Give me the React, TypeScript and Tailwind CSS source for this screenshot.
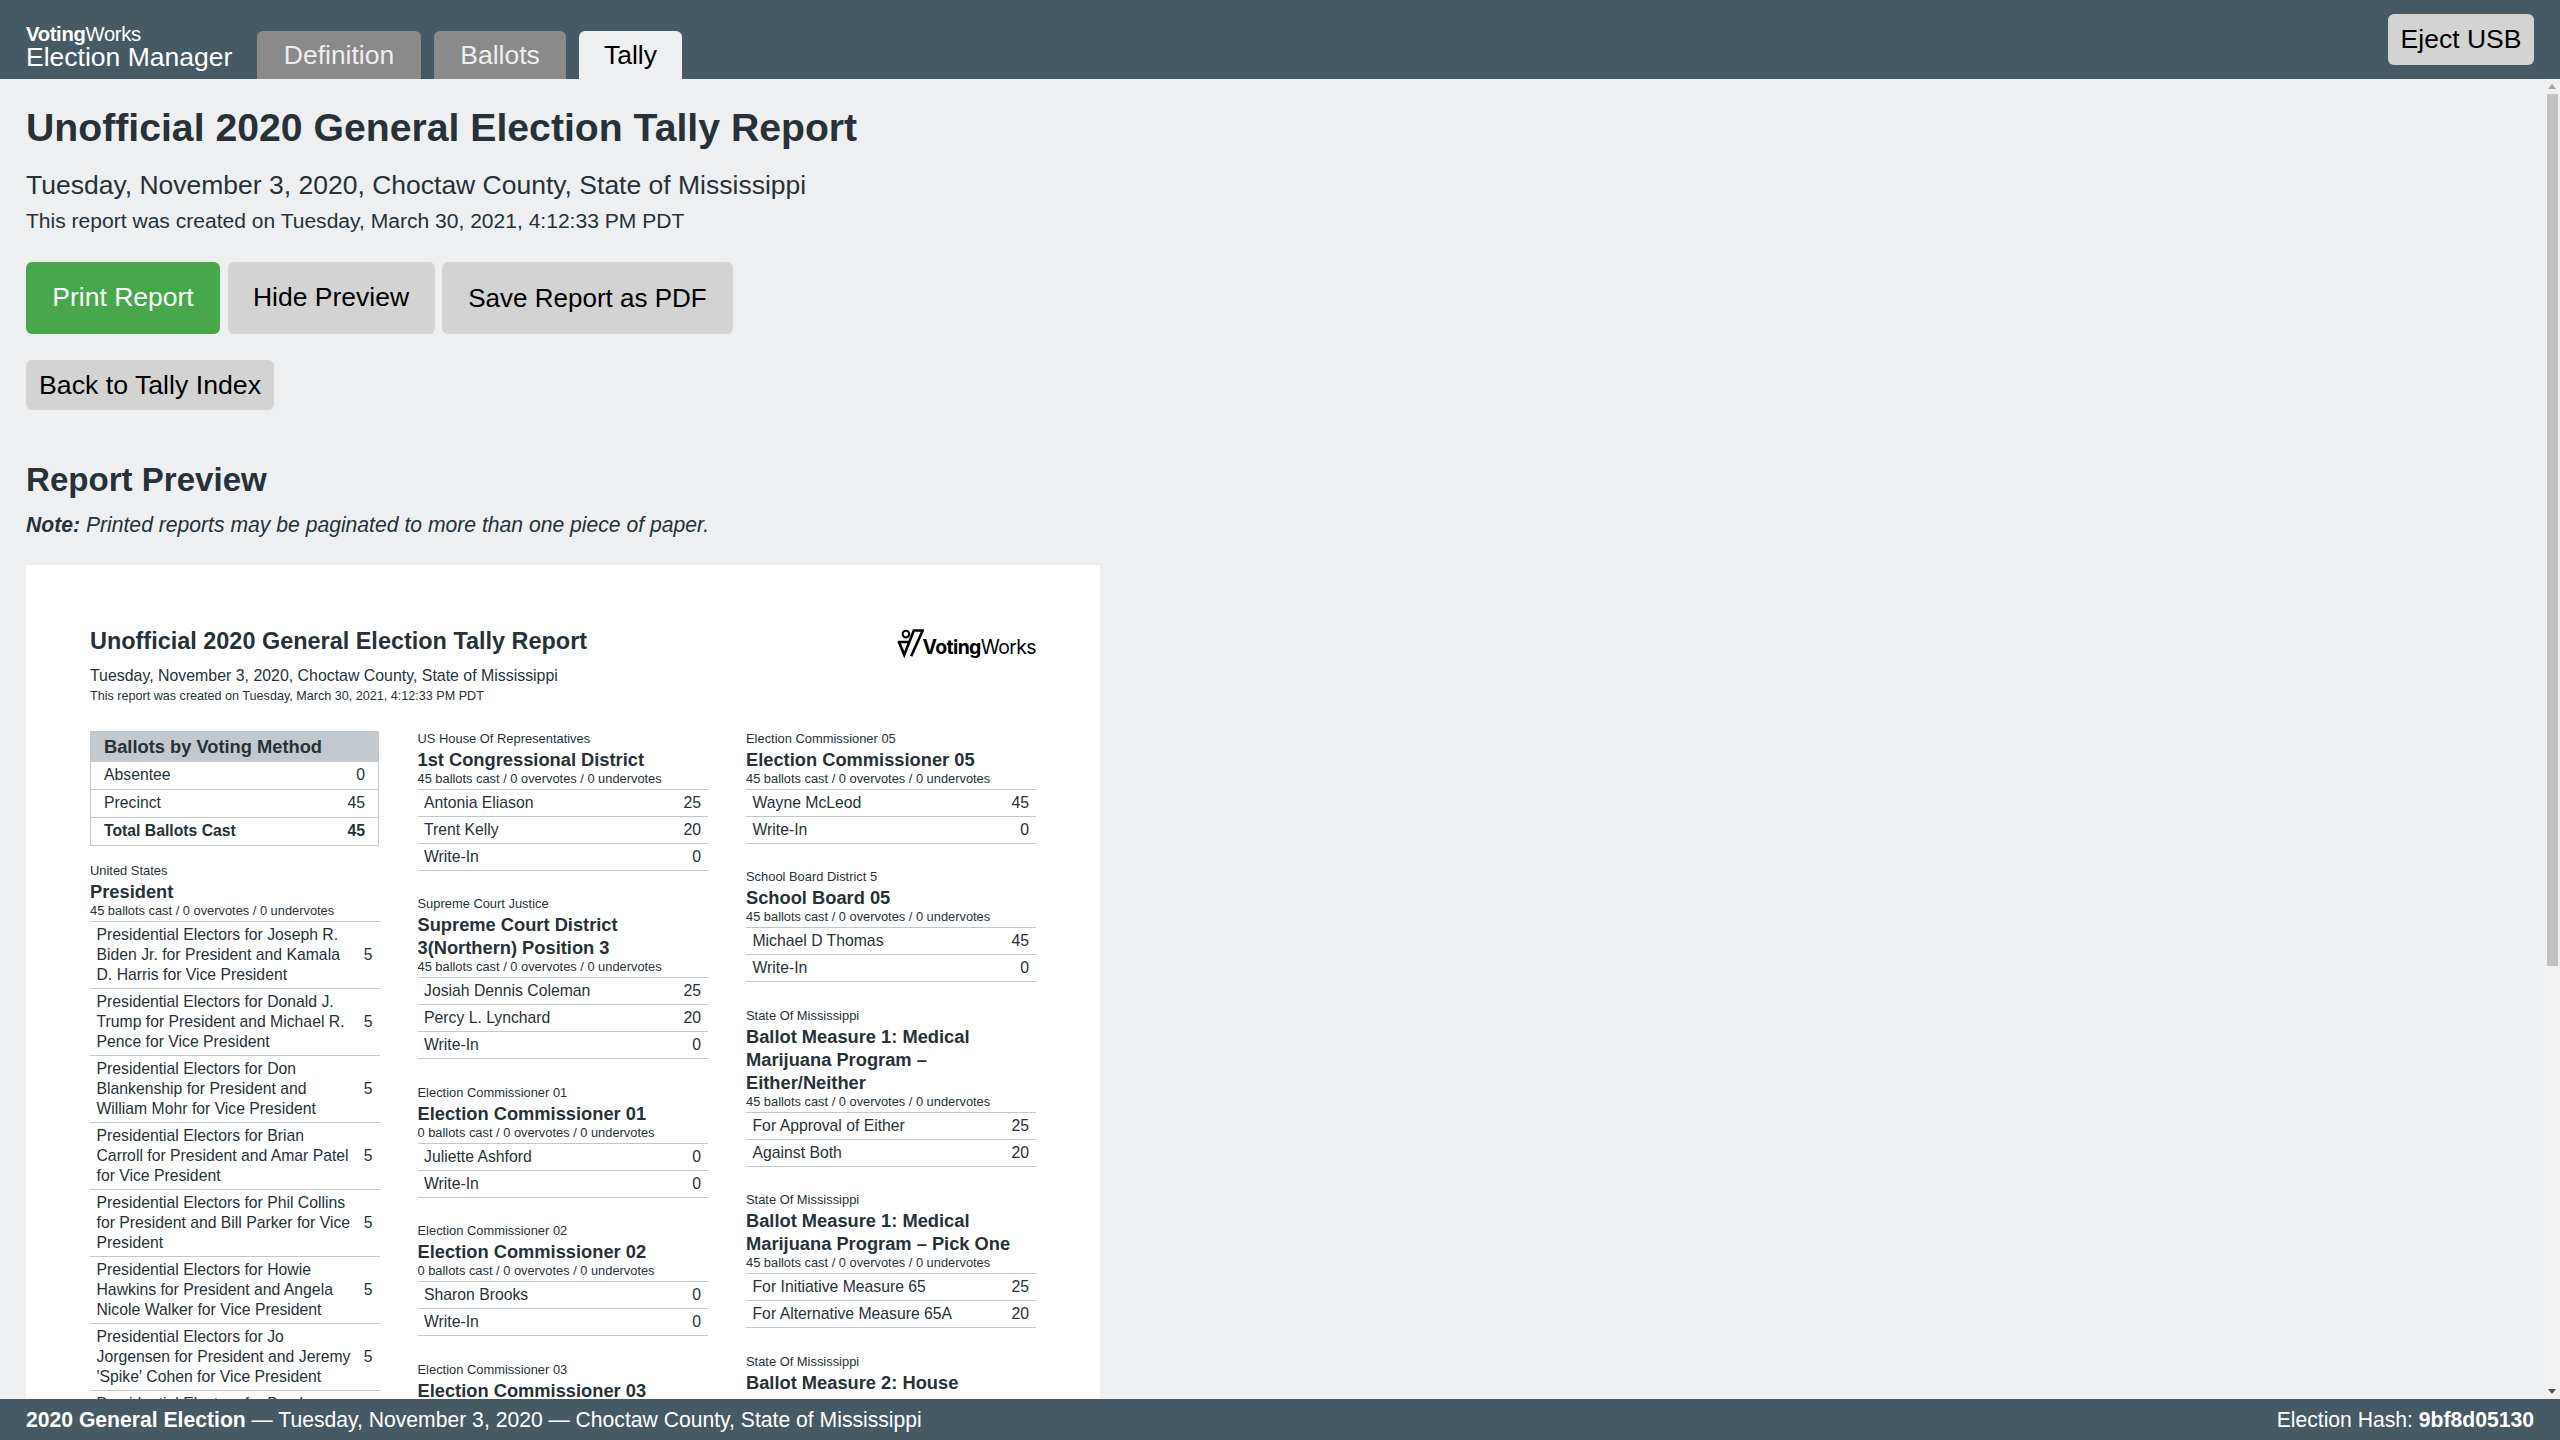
const font = { fontFamily: '"Liberation Sans", Arial, sans-serif' };

type C = { label: string; title: string; meta?: string; rows: [string, number][] };
const m45 = '45 ballots cast / 0 overvotes / 0 undervotes';
const m0 = '0 ballots cast / 0 overvotes / 0 undervotes';

const col1: C[] = [
  {
    label: 'United States', title: 'President', meta: m45,
    rows: [
      ['Presidential Electors for Joseph R. Biden Jr. for President and Kamala D. Harris for Vice President', 5],
      ['Presidential Electors for Donald J. Trump for President and Michael R. Pence for Vice President', 5],
      ['Presidential Electors for Don Blankenship for President and William Mohr for Vice President', 5],
      ['Presidential Electors for Brian Carroll for President and Amar Patel for Vice President', 5],
      ['Presidential Electors for Phil Collins for President and Bill Parker for Vice President', 5],
      ['Presidential Electors for Howie Hawkins for President and Angela Nicole Walker for Vice President', 5],
      ["Presidential Electors for Jo Jorgensen for President and Jeremy 'Spike' Cohen for Vice President", 5],
      ['Presidential Electors for Brock Pierce for President and Karla Ballard for Vice President', 5],
    ],
  },
];
const col2: C[] = [
  { label: 'US House Of Representatives', title: '1st Congressional District', meta: m45, rows: [['Antonia Eliason', 25], ['Trent Kelly', 20], ['Write-In', 0]] },
  { label: 'Supreme Court Justice', title: 'Supreme Court District 3(Northern) Position 3', meta: m45, rows: [['Josiah Dennis Coleman', 25], ['Percy L. Lynchard', 20], ['Write-In', 0]] },
  { label: 'Election Commissioner 01', title: 'Election Commissioner 01', meta: m0, rows: [['Juliette Ashford', 0], ['Write-In', 0]] },
  { label: 'Election Commissioner 02', title: 'Election Commissioner 02', meta: m0, rows: [['Sharon Brooks', 0], ['Write-In', 0]] },
  { label: 'Election Commissioner 03', title: 'Election Commissioner 03', meta: m0, rows: [['Write-In', 0]] },
];
const col3: C[] = [
  { label: 'Election Commissioner 05', title: 'Election Commissioner 05', meta: m45, rows: [['Wayne McLeod', 45], ['Write-In', 0]] },
  { label: 'School Board District 5', title: 'School Board 05', meta: m45, rows: [['Michael D Thomas', 45], ['Write-In', 0]] },
  { label: 'State Of Mississippi', title: 'Ballot Measure 1: Medical Marijuana Program – Either/Neither', meta: m45, rows: [['For Approval of Either', 25], ['Against Both', 20]] },
  { label: 'State Of Mississippi', title: 'Ballot Measure 1: Medical Marijuana Program – Pick One', meta: m45, rows: [['For Initiative Measure 65', 25], ['For Alternative Measure 65A', 20]] },
  { label: 'State Of Mississippi', title: 'Ballot Measure 2: House Concurrent Resolution No. 47', meta: m45, rows: [['Yes', 25], ['No', 20]] },
];

function Contest({ c }: { c: C }) {
  return (
    <section className="mb-[25.5px]">
      <div className="text-[12.9px] leading-[16px] mb-px">{c.label}</div>
      <h3 className="text-[18.3px] leading-[23px] font-bold">{c.title}</h3>
      <div className="text-[12.85px] leading-[15px] mb-[3px]">{c.meta}</div>
      <div className="border-t border-[#c2c8cc]">
        {c.rows.map(([n, v], i) => (
          <div key={i} className="flex items-center justify-between border-b border-[#c2c8cc] pl-[6.5px] pr-[7px] py-[3px] text-[15.75px] leading-[20px]">
            <span className="w-[257px]">{n}</span>
            <span className="text-right">{v}</span>
          </div>
        ))}
      </div>
    </section>
  );
}

function Logo() {
  return (
    <div className="flex items-end text-black mt-[2px]">
      <svg width="27" height="30" viewBox="590 140 82 88" className="mr-[-1px]" fill="none" stroke="#000" strokeWidth="8">
        <circle cx="617" cy="157" r="10" strokeWidth="6" />
        <path d="M592 181H626M596 181L612 220L641 146H668L633 224" />
      </svg>
      <span className="text-[19.4px] leading-[22px] tracking-[-0.6px]" style={{ fontFamily: 'Inter, sans-serif' }}>
        <b className="font-bold">Voting</b>Works
      </span>
    </div>
  );
}

function Row({ n, v, bold }: { n: string; v: number; bold?: boolean }) {
  return (
    <div className={`flex justify-between border-b border-[#c2c8cc] px-[13px] py-[3.5px] text-[15.75px] leading-[20px] ${bold ? 'font-bold' : ''}`}>
      <span>{n}</span>
      <span>{v}</span>
    </div>
  );
}

export default function App() {
  return (
    <div className="h-screen flex flex-col bg-[#edeff0] text-[#263238] overflow-hidden" style={font}>
      <header className="h-[79px] shrink-0 bg-[#455a64] flex items-end justify-between pl-[26px] pr-[26px]">
        <div className="flex items-end">
          <div className="text-white mb-[9px] mr-[25px] w-[206px]">
            <div className="text-[20.2px] leading-[19px] tracking-[-0.3px]"><b>Voting</b>Works</div>
            <div className="text-[26.5px] leading-[26px] whitespace-nowrap">Election Manager</div>
          </div>
          <div className="flex gap-[13px]">
            <div className="h-[48px] w-[164px] text-center rounded-t-[6px] bg-[#8a8a8a] text-[#eeeeee] text-[26.5px] leading-[48px]">Definition</div>
            <div className="h-[48px] w-[132px] text-center rounded-t-[6px] bg-[#8a8a8a] text-[#eeeeee] text-[26.5px] leading-[48px]">Ballots</div>
            <div className="h-[48px] w-[103px] text-center rounded-t-[6px] bg-[#edeff0] text-black text-[26.5px] leading-[48px]">Tally</div>
          </div>
        </div>
        <button className="mb-[14px] h-[51px] w-[146px] rounded-[6px] bg-[#d3d3d3] text-black text-[26.5px]">Eject USB</button>
      </header>

      <div className="relative flex-1 min-h-0">
        <main className="h-full overflow-y-hidden px-[26px] pt-[26px] pb-[26px]">
          <h1 className="text-[39.2px] leading-[46px] font-bold mb-[16px]">Unofficial 2020 General Election Tally Report</h1>
          <p className="text-[26.5px] leading-[36px]">Tuesday, November 3, 2020, Choctaw County, State of Mississippi</p>
          <p className="text-[21.05px] leading-[36px] mb-[23px]">This report was created on Tuesday, March 30, 2021, 4:12:33 PM PDT</p>
          <div className="flex gap-[7.5px] mb-[26px]">
            <button className="h-[72px] w-[194px] rounded-[6px] bg-[#47a74b] text-white text-[26.5px]">Print Report</button>
            <button className="h-[72px] w-[207px] rounded-[6px] bg-[#d3d3d3] text-black text-[26.5px]">Hide Preview</button>
            <button className="h-[72px] w-[291px] rounded-[6px] bg-[#d3d3d3] text-black text-[26px]">Save Report as PDF</button>
          </div>
          <button className="block h-[50px] w-[248px] rounded-[6px] bg-[#d3d3d3] text-black text-[26.7px] mb-[50px]">Back to Tally Index</button>
          <h2 className="text-[33.1px] leading-[40px] font-bold mb-[9.5px]">Report Preview</h2>
          <p className="text-[21.15px] leading-[30px] italic mb-[25.5px]"><b>Note:</b> Printed reports may be paginated to more than one piece of paper.</p>

          <div className="w-[1074px] h-[1442px] bg-white px-[64px] pt-[61px] overflow-hidden">
            <div className="flex justify-between items-start h-[104.5px]">
              <div>
                <h2 className="text-[23.45px] leading-[30px] font-bold mb-[9px]">Unofficial 2020 General Election Tally Report</h2>
                <p className="text-[15.9px] leading-[22px]">Tuesday, November 3, 2020, Choctaw County, State of Mississippi</p>
                <p className="text-[12.6px] leading-[18px]">This report was created on Tuesday, March 30, 2021, 4:12:33 PM PDT</p>
              </div>
              <Logo />
            </div>
            <div className="grid grid-cols-[289.5px_290.5px_290px] gap-x-[38px]">
              <div>
                <div className="border-x border-b border-[#c2c8cc] mb-[17px] w-[289px]">
                  <div className="bg-[#c2c8cc] h-[31px] px-[13px] text-[18.3px] leading-[31px] font-bold">Ballots by Voting Method</div>
                  <Row n="Absentee" v={0} />
                  <Row n="Precinct" v={45} />
                  <div className="[&>div]:border-b-0"><Row n="Total Ballots Cast" v={45} bold /></div>
                </div>
                {col1.map((c, i) => <Contest key={i} c={c} />)}
              </div>
              <div>{col2.map((c, i) => <Contest key={i} c={c} />)}</div>
              <div>{col3.map((c, i) => <Contest key={i} c={c} />)}</div>
            </div>
          </div>
        </main>
        <div className="absolute right-0 top-0 bottom-0 w-[15px] bg-[#f1f1f1]">
          <div className="absolute right-[2px] top-[15px] w-[11px] h-[872px] bg-[#c1c1c1]" />
          <div className="absolute right-[4px] top-[5px] w-0 h-0 border-x-[4px] border-x-transparent border-b-[5px] border-b-[#a3a3a3]" />
          <div className="absolute right-[4px] bottom-[5px] w-0 h-0 border-x-[4px] border-x-transparent border-t-[5px] border-t-[#505050]" />
        </div>
      </div>

      <footer className="h-[41px] shrink-0 bg-[#455a64] text-white flex items-center justify-between px-[26px] text-[21.15px]">
        <div><b>2020 General Election</b> — Tuesday, November 3, 2020 — Choctaw County, State of Mississippi</div>
        <div>Election Hash: <b>9bf8d05130</b></div>
      </footer>
    </div>
  );
}
